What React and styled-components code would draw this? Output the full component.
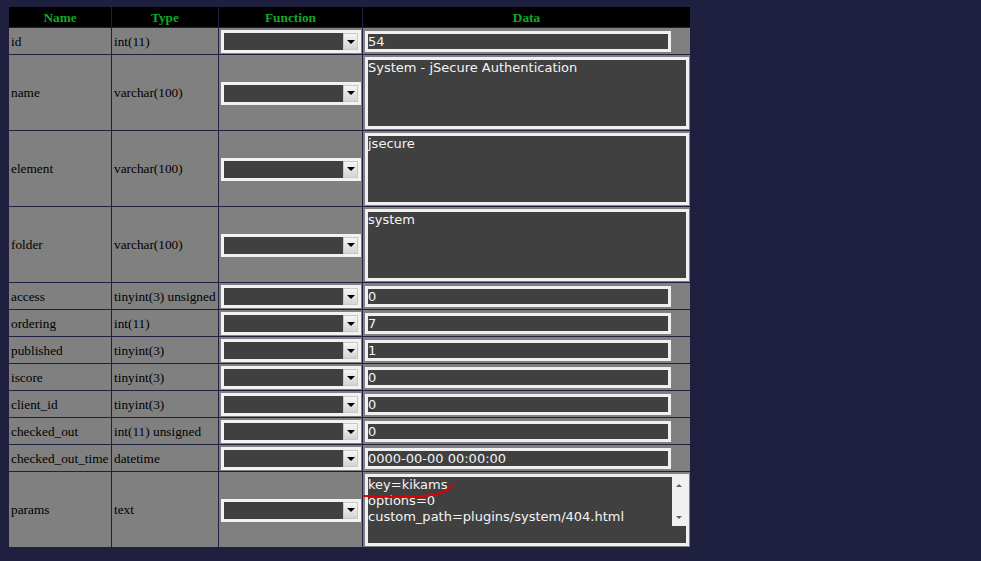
import React from 'react';
import styled, { createGlobalStyle } from 'styled-components';

const Global = createGlobalStyle`
  html, body {
    margin: 0;
    background: #1f1f40;
  }
  body {
    padding: 6px 8px;
    font-family: "Liberation Serif", "Times New Roman", serif;
  }
`;

const Table = styled.table`
  border-collapse: separate;
  border-spacing: 1px;
  background: #1f1f40;
  font-size: 13.3px;
  color: #000;
`;

const Th = styled.th`
  background: #000;
  color: #11a827;
  font-weight: bold;
  height: 20px;
  padding: 1px 0 0;
  width: ${p => p.w}px;
  box-sizing: border-box;
  text-align: center;
  vertical-align: middle;
`;

const Td = styled.td`
  background: #808080;
  height: ${p => (p.tall ? 75 : 26)}px;
  padding: 1px 0 0 2px;
  box-sizing: border-box;
  vertical-align: middle;
  white-space: nowrap;
  position: relative;
`;

const SelectBox = styled.div`
  width: 140px;
  height: 23px;
  box-sizing: border-box;
  border: 3px solid #f2f2f2;
  background: #404040;
  display: flex;
  justify-content: flex-end;
`;

const Arrow = styled.div`
  width: 15px;
  height: 17px;
  box-sizing: border-box;
  border: 1px solid #c8c8c8;
  background: linear-gradient(#f6f6f6, #d4d4d4);
  display: flex;
  align-items: center;
  justify-content: center;
  &::after {
    content: '';
    border-left: 4px solid transparent;
    border-right: 4px solid transparent;
    border-top: 4px solid #000;
  }
`;

const Field = styled.div`
  width: ${p => (p.area ? 324 : 306)}px;
  height: ${p => (p.area ? 72 : 21)}px;
  box-sizing: border-box;
  border: 3px solid #f0f0f0;
  background: #404040;
  color: #f4f4f4;
  font-family: "DejaVu Sans", Verdana, sans-serif;
  font-size: 13px;
  line-height: ${p => (p.area ? 16 : 15)}px;
  padding: 0;
  overflow: hidden;
  white-space: pre;
  display: flex;
`;

const FieldText = styled.div`
  flex: 1;
`;

const ScrollBar = styled.div`
  width: 14px;
  height: 49px;
  background: #f0f0f0;
  display: flex;
  flex-direction: column;
  justify-content: space-between;
  align-items: center;
  padding: 7px 0;
  box-sizing: border-box;
`;

const ScrollArrow = styled.div`
  border-left: 3px solid transparent;
  border-right: 3px solid transparent;
  ${p => (p.up ? 'border-bottom: 3px solid #606060;' : 'border-top: 3px solid #606060;')}
`;

const Mark = styled.svg`
  position: absolute;
  left: 0;
  top: 3px;
  pointer-events: none;
`;

const rows = [
  { name: 'id', type: 'int(11)', value: '54' },
  { name: 'name', type: 'varchar(100)', value: 'System - jSecure Authentication', area: true },
  { name: 'element', type: 'varchar(100)', value: 'jsecure', area: true },
  { name: 'folder', type: 'varchar(100)', value: 'system', area: true },
  { name: 'access', type: 'tinyint(3) unsigned', value: '0' },
  { name: 'ordering', type: 'int(11)', value: '7' },
  { name: 'published', type: 'tinyint(3)', value: '1' },
  { name: 'iscore', type: 'tinyint(3)', value: '0' },
  { name: 'client_id', type: 'tinyint(3)', value: '0' },
  { name: 'checked_out', type: 'int(11) unsigned', value: '0' },
  { name: 'checked_out_time', type: 'datetime', value: '0000-00-00 00:00:00' },
  { name: 'params', type: 'text', value: 'key=kikams\noptions=0\ncustom_path=plugins/system/404.html', area: true, scroll: true },
];

const App = () => (
  <>
    <Global />
    <Table>
      <thead>
        <tr>
          <Th w={102}>Name</Th>
          <Th w={106}>Type</Th>
          <Th w={143}>Function</Th>
          <Th w={327}>Data</Th>
        </tr>
      </thead>
      <tbody>
        {rows.map(r => (
          <tr key={r.name}>
            <Td tall={r.area}>{r.name}</Td>
            <Td tall={r.area}>{r.type}</Td>
            <Td tall={r.area}>
              <SelectBox><Arrow /></SelectBox>
            </Td>
            <Td tall={r.area}>
              <Field area={r.area}>
                <FieldText>{r.value}</FieldText>
                {r.scroll && (
                  <ScrollBar>
                    <ScrollArrow up />
                    <ScrollArrow />
                  </ScrollBar>
                )}
              </Field>
              {r.scroll && (
                <Mark width="100" height="30">
                  <path d="M1 21 C 30 22, 68 22, 78 18 C 85 15, 89 12, 90 9" fill="none" stroke="#e00000" strokeWidth="2" strokeLinecap="round" />
                </Mark>
              )}
            </Td>
          </tr>
        ))}
      </tbody>
    </Table>
  </>
);

export default App;
